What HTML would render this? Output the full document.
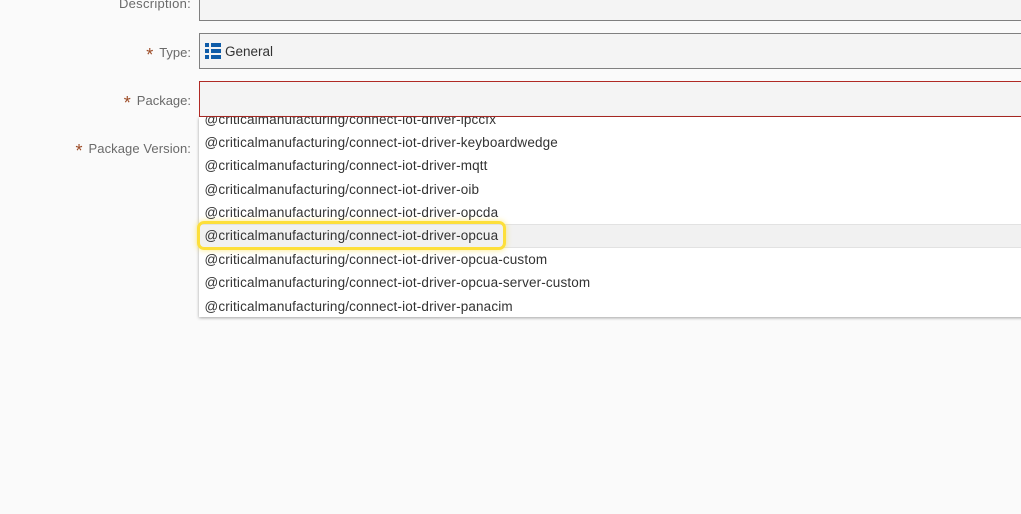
<!DOCTYPE html>
<html><head><meta charset="utf-8"><style>
html,body{margin:0;padding:0;background:#fafafa;width:1021px;height:514px;overflow:hidden;position:relative;font-family:"Liberation Sans",sans-serif}
div{position:absolute;box-sizing:border-box}
.box{left:199px;width:830px;background:#f4f4f4;border:1px solid #808080}
.lab{right:830px;font-size:13px;color:#6a6a6a;white-space:nowrap;line-height:18px}
.lab b{color:#9c4a25;font-weight:normal;margin-right:6px;font-size:18px;line-height:0;position:relative;top:4px}
.it{left:204.5px;font-size:13.5px;color:#333;white-space:nowrap;letter-spacing:.147px;line-height:18px}
</style></head><body>
<div class="box" style="top:-20px;height:41px"></div>
<div class="lab" style="top:-5px;letter-spacing:.28px">Description:</div>
<div class="box" style="top:33px;height:36px"></div>
<div class="lab" style="top:44px"><b>*</b>Type:</div>
<svg style="position:absolute;left:205px;top:43px" width="16" height="16" viewBox="0 0 16 16" shape-rendering="crispEdges"><g fill="#0f5ca8"><rect x="0" y="0" width="4" height="4"/><rect x="6" y="0" width="10" height="4"/><rect x="0" y="6" width="4" height="4"/><rect x="6" y="6" width="10" height="4"/><rect x="0" y="12" width="4" height="4"/><rect x="6" y="12" width="10" height="4"/></g></svg>
<div style="left:225px;top:43px;font-size:13.5px;color:#333;line-height:18px">General</div>
<div class="box" style="top:81px;height:36px;border-color:#b02a25"></div>
<div class="lab" style="top:92px"><b>*</b>Package:</div>
<div class="lab" style="top:140px;letter-spacing:.08px"><b>*</b>Package Version:</div>
<div style="left:199px;top:117px;width:830px;height:200px;background:#fff;box-shadow:0 1px 3px rgba(0,0,0,.35);overflow:hidden"></div>
<div style="left:199px;top:224px;width:830px;height:24px;background:#f1f1f1;border-top:1px solid #e2e2e2;border-bottom:1px solid #e2e2e2"></div>
<div style="left:197px;top:221px;width:309px;height:29px;border:3px solid #fddf3a;border-radius:7px;box-shadow:0 0 6px rgba(253,224,58,.65)"></div>
<div style="left:199px;top:117px;width:830px;height:10px;overflow:hidden"><div class="it" style="left:5.5px;top:-6px">@criticalmanufacturing/connect-iot-driver-ipccfx</div></div>
<div class="it" style="top:134px">@criticalmanufacturing/connect-iot-driver-keyboardwedge</div>
<div class="it" style="top:157px">@criticalmanufacturing/connect-iot-driver-mqtt</div>
<div class="it" style="top:181px">@criticalmanufacturing/connect-iot-driver-oib</div>
<div class="it" style="top:204px">@criticalmanufacturing/connect-iot-driver-opcda</div>
<div class="it" style="top:227px">@criticalmanufacturing/connect-iot-driver-opcua</div>
<div class="it" style="top:251px">@criticalmanufacturing/connect-iot-driver-opcua-custom</div>
<div class="it" style="top:274px">@criticalmanufacturing/connect-iot-driver-opcua-server-custom</div>
<div class="it" style="top:298px">@criticalmanufacturing/connect-iot-driver-panacim</div>
</body></html>
